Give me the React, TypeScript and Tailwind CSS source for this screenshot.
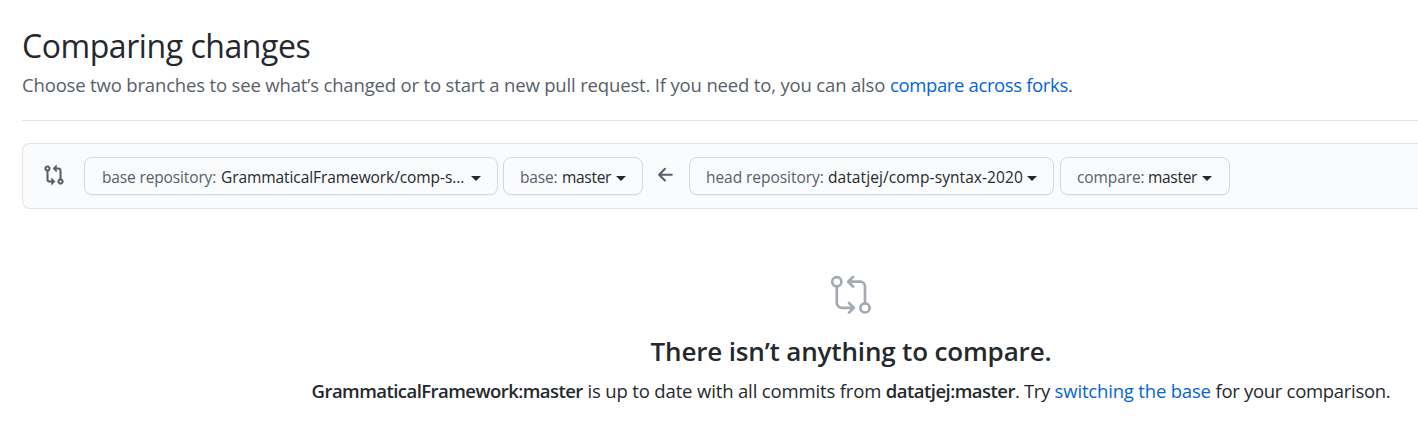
import type { ReactNode } from "react";

function Compare({ className }: { className: string }) {
  return (
    <svg viewBox="0 0 16 16" className={className} fill="currentColor" aria-hidden="true">
      <path
        fillRule="evenodd"
        d="M9.573.677L7.177 3.073a.25.25 0 000 .354l2.396 2.396A.25.25 0 0010 5.646V4h1a1 1 0 011 1v5.628a2.251 2.251 0 101.5 0V5A2.5 2.5 0 0011 2.5h-1V.854a.25.25 0 00-.427-.177zM6 12v-1.646a.25.25 0 01.427-.177l2.396 2.396a.25.25 0 010 .354l-2.396 2.396A.25.25 0 016 15.146V13.5H5A2.5 2.5 0 012.5 11V5.372a2.25 2.25 0 111.5 0V11a1 1 0 001 1h1zM4 3.25a.75.75 0 10-1.5 0 .75.75 0 001.5 0zM12.75 12a.75.75 0 100 1.5.75.75 0 000-1.5z"
      />
    </svg>
  );
}

function CompareLarge({ className }: { className: string }) {
  return (
    <svg
      viewBox="0 0 44 44"
      className={className}
      fill="none"
      stroke="currentColor"
      strokeWidth="2.7"
      strokeLinecap="round"
      strokeLinejoin="round"
      aria-hidden="true"
    >
      <circle cx="7.8" cy="8.7" r="4.6" />
      <circle cx="36" cy="34.9" r="4.6" />
      <path d="M7.8 13.3V30a4.8 4.8 0 004.8 4.8h11.2M20 30l4.8 4.8L20 39.6" />
      <path d="M36 30.3V13.5a4.8 4.8 0 00-4.8-4.8H20M24 3.9l-4.8 4.8 4.8 4.8" />
    </svg>
  );
}

function ArrowLeft({ className }: { className: string }) {
  return (
    <svg viewBox="0 0 16 16" className={className} fill="currentColor" aria-hidden="true">
      <path
        fillRule="evenodd"
        d="M7.78 12.53a.75.75 0 01-1.06 0L2.47 8.28a.75.75 0 010-1.06l4.25-4.25a.75.75 0 011.06 1.06L4.81 7h7.44a.75.75 0 010 1.5H4.81l2.97 2.97a.75.75 0 010 1.06z"
      />
    </svg>
  );
}

function Picker({ className, children }: { className: string; children: ReactNode }) {
  return (
    <button
      type="button"
      className={`flex h-[38px] shrink-0 items-center rounded-[8px] border border-[#d7d9dc] bg-[#fafbfc] pt-[2px] text-[15.5px] leading-[28px] whitespace-nowrap text-[#24292e] shadow-[0_1px_0_rgba(27,31,35,0.04)] ${className}`}
    >
      {children}
      <span className="mt-[2px] h-0 w-0 border-x-[5px] border-t-[5px] border-x-transparent border-t-[#24292e]" />
    </button>
  );
}

export default function App() {
  return (
    <div className="h-[425px] overflow-hidden bg-white pl-[22px] font-['Open_Sans','Noto_Sans',sans-serif] text-[#24292e]">
      <header className="h-[121px] border-b border-[#e1e4e8] pt-[25px]">
        <h1 className="text-[32px] leading-[42px] font-normal tracking-[-0.44px]">Comparing changes</h1>
        <p className="mt-[4px] text-[18.5px] leading-[28px] tracking-[-0.165px] whitespace-nowrap text-[#586069]">
          Choose two branches to see what’s changed or to start a new pull request. If you need to, you can also{" "}
          <a href="#" className="tracking-[-0.36px] text-[#0366d6]">
            compare across forks
          </a>
          .
        </p>
      </header>

      <div className="mt-[22px] flex h-[66px] items-start rounded-l-[8px] border border-r-0 border-[#e1e4e8] bg-[#fafbfc] pt-[13px] pl-[20px]">
        <Compare className="mt-[7px] mr-[19px] h-[22px] w-[22px] shrink-0 text-[#586069]" />
        <Picker className="w-[414px] pl-[17px]">
          <span className="w-[119px] text-left tracking-[-0.14px] text-[#586069]">base repository:</span>
          <span className="w-[250px] text-left tracking-[-0.08px]">GrammaticalFramework/comp-s...</span>
        </Picker>
        <Picker className="ml-[5px] w-[140px] pl-[16px]">
          <span className="w-[42px] text-left tracking-[-0.15px] text-[#586069]">base:</span>
          <span className="w-[54px] text-left tracking-[-0.3px]">master</span>
        </Picker>
        <ArrowLeft className="mx-[12px] mt-[7px] h-[22px] w-[22px] shrink-0 text-[#586069]" />
        <Picker className="w-[365px] pl-[16px]">
          <span className="w-[122px] text-left tracking-[-0.05px] text-[#586069]">head repository:</span>
          <span className="w-[199px] text-left tracking-[0.08px]">datatjej/comp-syntax-2020</span>
        </Picker>
        <Picker className="ml-[6px] w-[170px] pl-[16px]">
          <span className="w-[71px] text-left tracking-[-0.1px] text-[#586069]">compare:</span>
          <span className="w-[54px] text-left tracking-[-0.3px]">master</span>
        </Picker>
      </div>

      <main className="flex w-[1658px] flex-col items-center pt-[64px]">
        <CompareLarge className="h-[44px] w-[44px] text-[#a3aab1]" />
        <h2 className="mt-[14px] text-[26px] leading-[40px] font-semibold tracking-[-0.16px] whitespace-nowrap">
          There isn’t anything to compare.
        </h2>
        <p className="mt-[6px] text-[18.5px] leading-[28px] tracking-[-0.15px] whitespace-nowrap">
          <strong className="font-semibold tracking-[-0.55px]">GrammaticalFramework:master</strong> is up to date with
          all commits from <strong className="font-semibold tracking-[-0.53px]">datatjej:master</strong>
          <span className="tracking-[-0.3px]">. Try </span>
          <a href="#" className="tracking-[-0.18px] text-[#0366d6]">
            switching the base
          </a>{" "}
          <span className="tracking-[-0.3px]">for your comparison.</span>
        </p>
      </main>
    </div>
  );
}
